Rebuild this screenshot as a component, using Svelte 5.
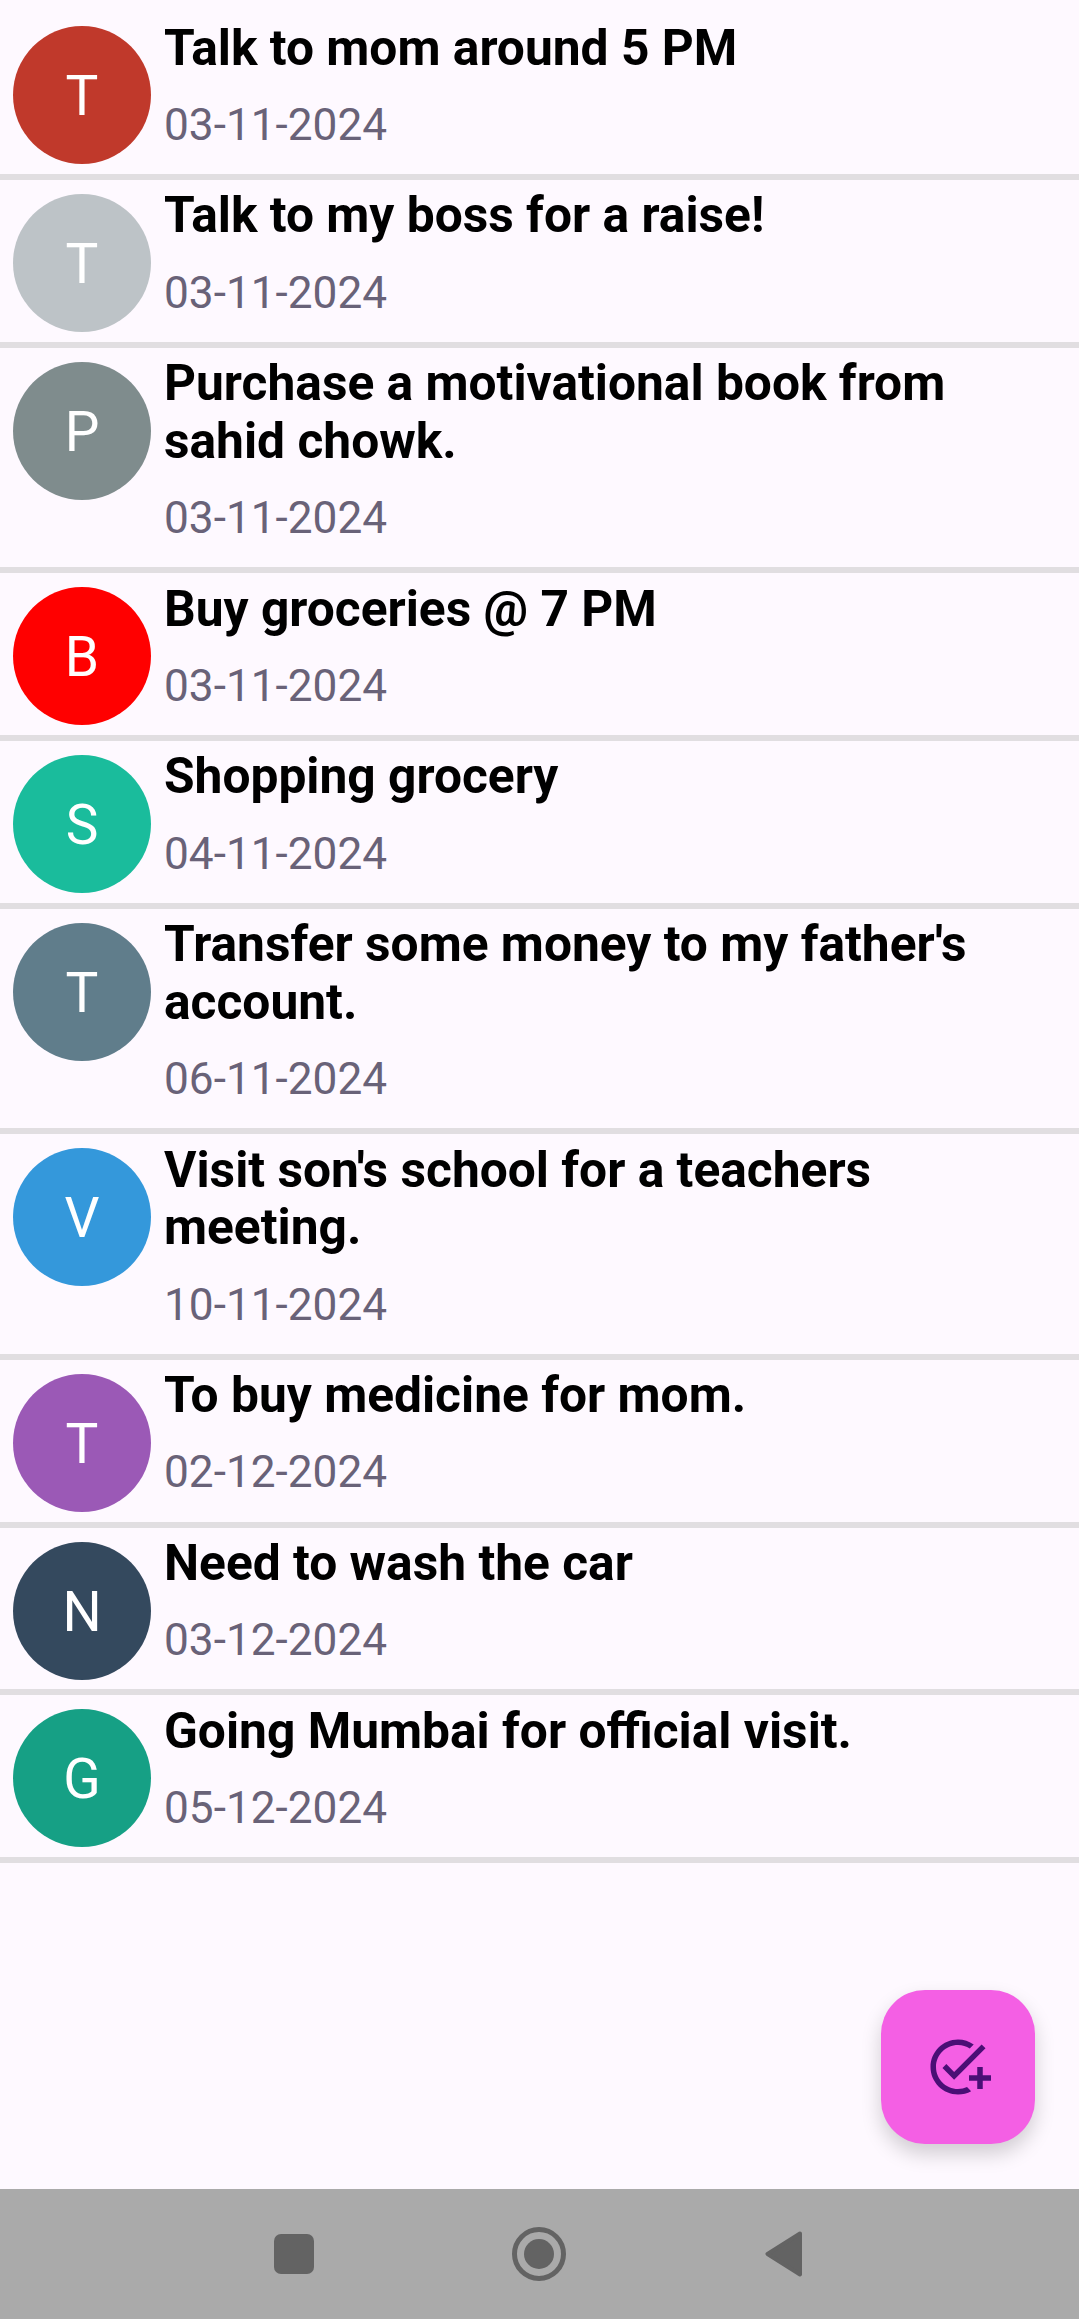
<script>
  const tasks = [
    { title: 'Talk to mom around 5 PM', date: '03-11-2024', color: '#c0392b' },
    { title: 'Talk to my boss for a raise!', date: '03-11-2024', color: '#bdc3c7' },
    { title: 'Purchase a motivational book from sahid chowk.', date: '03-11-2024', color: '#7f8c8d' },
    { title: 'Buy groceries @ 7 PM', date: '03-11-2024', color: '#ff0000' },
    { title: 'Shopping grocery', date: '04-11-2024', color: '#1abc9c' },
    { title: "Transfer some money to my father's account.", date: '06-11-2024', color: '#607d8b' },
    { title: "Visit son's school for a teachers meeting.", date: '10-11-2024', color: '#3498db' },
    { title: 'To buy medicine for mom.', date: '02-12-2024', color: '#9b59b6' },
    { title: 'Need to wash the car', date: '03-12-2024', color: '#34495e' },
    { title: 'Going Mumbai for official visit.', date: '05-12-2024', color: '#16a085' }
  ];
</script>

<div class="screen">
  <main class="list">
    {#each tasks as task}
      <article class="row">
        <div class="avatar" style="background: {task.color}">{task.title[0]}</div>
        <div class="body">
          <h2>{task.title}</h2>
          <p>{task.date}</p>
        </div>
      </article>
    {/each}

    <button class="fab" aria-label="Add task">
      <svg viewBox="0 0 24 24" width="66" height="66" fill="#4a0f75">
        <path d="M22 5.18 10.59 16.6l-4.24-4.24 1.41-1.41 2.83 2.83 10-10L22 5.18z" />
        <path d="M16.78 20.8C15.36 21.56 13.73 22 12 22 6.48 22 2 17.52 2 12S6.48 2 12 2c2.13 0 4.1.67 5.72 1.81l-1.44 1.44C15.04 4.46 13.58 4 12 4c-4.42 0-8 3.58-8 8s3.58 8 8 8c1.17 0 2.28-.25 3.28-.7l1.5 1.5z" />
        <path d="M19 15h-3v2h3v3h2v-3h3v-2h-3v-3h-2v3z" />
      </svg>
    </button>
  </main>

  <nav class="navbar">
    <span class="nav-square"></span>
    <span class="nav-home"><span></span></span>
    <svg class="nav-back" viewBox="0 0 38 46" width="38" height="46">
      <path d="M35 2.5 2.5 23 35 43.5Z" fill="#636363" stroke="#636363" stroke-width="4" stroke-linejoin="round" />
    </svg>
  </nav>
</div>

<style>
  :global(body) { margin: 0; background: #fef9ff; }
  .screen { display: flex; flex-direction: column; height: 2319px; overflow: hidden; font-family: Roboto, sans-serif; background: #fef9ff; }
  .list { position: relative; flex: 1; min-height: 0; padding-top: 12.25px; box-sizing: border-box; }
  .row { display: flex; align-items: flex-start; gap: 13px; padding-left: 13px; border-bottom: 6px solid #e1dee1; }
  .avatar { flex: none; display: flex; align-items: center; justify-content: center; width: 138px; height: 138px; box-sizing: border-box; margin-top: 14px; padding-top: 3px; border-radius: 50%; color: #fff; font-size: 55px; line-height: 1; }
  .body { flex: 1; min-width: 0; padding: 7.25px 40px 23.25px 0; }
  h2 { margin: 0; color: #000; font-size: 49.7px; font-weight: 700; line-height: 57.75px; }
  p { margin: 21.5px 0 0; color: #696278; font-size: 44.2px; line-height: 52px; }
  .fab { position: absolute; right: 44px; bottom: 45px; display: flex; align-items: center; justify-content: center; width: 154px; height: 154px; padding: 0; border: 0; border-radius: 44px; background: #f45fe4; box-shadow: 0 10px 20px rgba(0, 0, 0, .18); }
  .navbar { flex: none; position: relative; display: flex; align-items: center; height: 130px; background: #aaa; }
  .nav-square { margin-left: 274px; width: 40px; height: 40px; border-radius: 7px; background: #636363; }
  .nav-home { display: flex; align-items: center; justify-content: center; margin-left: 198px; width: 54px; height: 54px; box-sizing: border-box; border: 5px solid #636363; border-radius: 50%; }
  .nav-home span { width: 30px; height: 30px; border-radius: 50%; background: #636363; }
  .nav-back { margin-left: 199px; }
</style>
